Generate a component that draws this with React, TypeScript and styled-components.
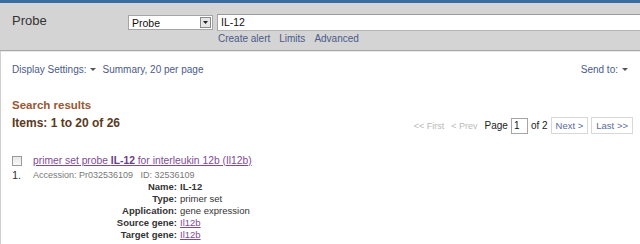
import React from "react";
import styled, { createGlobalStyle } from "styled-components";

const fields: { label: string; value: string; bold?: boolean; link?: boolean }[] = [
  { label: "Name:", value: "IL-12", bold: true },
  { label: "Type:", value: "primer set" },
  { label: "Application:", value: "gene expression" },
  { label: "Source gene:", value: "Il12b", link: true },
  { label: "Target gene:", value: "Il12b", link: true },
];

const App: React.FC = () => {
  return (
    <Page>
      <GlobalStyle />
      <TopBar />
      <Header>
        <Title>Probe</Title>
        <SearchArea>
          <SearchRow>
            <DbSelect>
              <span>Probe</span>
              <DropButton>
                <svg width="5" height="3" viewBox="0 0 5 3">
                  <path d="M0 0h5L2.5 3z" fill="#222" />
                </svg>
              </DropButton>
            </DbSelect>
            <Term>IL-12</Term>
          </SearchRow>
          <SearchLinks>
            <NavLink>Create alert</NavLink>
            <NavLink>Limits</NavLink>
            <NavLink>Advanced</NavLink>
          </SearchLinks>
        </SearchArea>
      </Header>
      <Main>
        <SettingsRow>
          <SettingsGroup>
            <NavLink>
              Display Settings: <Caret />
            </NavLink>
            <NavLink>Summary, 20 per page</NavLink>
          </SettingsGroup>
          <NavLink>
            Send to: <Caret />
          </NavLink>
        </SettingsRow>
        <Heading>Search results</Heading>
        <CountRow>
          <Count>Items: 1 to 20 of 26</Count>
          <Pager>
            <PagerDisabled>&lt;&lt; First</PagerDisabled>
            <PagerDisabled>&lt; Prev</PagerDisabled>
            <PageLabel>Page</PageLabel>
            <PageBox>1</PageBox>
            <PageLabel>of 2</PageLabel>
            <PagerButton>Next &gt;</PagerButton>
            <PagerButton>Last &gt;&gt;</PagerButton>
          </Pager>
        </CountRow>
        <Result>
          <CheckCol>
            <CheckBox />
            <Num>1.</Num>
          </CheckCol>
          <ResultBody>
            <ResultTitle>
              primer set probe <b>IL-12</b> for interleukin 12b (Il12b)
            </ResultTitle>
            <Meta>Accession: Pr032536109&nbsp;&nbsp;&nbsp;ID: 32536109</Meta>
            <FieldTable>
              {fields.map((f) => (
                <React.Fragment key={f.label}>
                  <FieldLabel>{f.label}</FieldLabel>
                  <FieldValue $bold={f.bold} $link={f.link}>
                    {f.value}
                  </FieldValue>
                </React.Fragment>
              ))}
            </FieldTable>
          </ResultBody>
        </Result>
      </Main>
    </Page>
  );
};

const GlobalStyle = createGlobalStyle`
  body {
    margin: 0;
    background: #fff;
    font-family: "Liberation Sans", Arial, sans-serif;
    overflow: hidden;
  }
`;

const Page = styled.div`
  width: 640px;
  height: 244px;
  overflow: hidden;
`;

const TopBar = styled.div`
  height: 3px;
  background: #386ca3;
`;

const Header = styled.div`
  display: flex;
  height: 47px;
  background: #d4d4d4;
  border-bottom: 1px solid #a9a9a9;
  box-shadow: 0 1px 0 #e8e8e8;
  overflow: hidden;
`;

const Title = styled.div`
  flex: 0 0 116px;
  padding: 10px 0 0 12px;
  font-size: 13px;
  color: #333;
`;

const SearchArea = styled.div`
  display: flex;
  flex-direction: column;
  flex-shrink: 0;
  padding-top: 11px;
`;

const SearchRow = styled.div`
  display: flex;
  align-items: center;
  gap: 4px;
`;

const DbSelect = styled.div`
  display: flex;
  align-items: center;
  justify-content: space-between;
  box-sizing: border-box;
  width: 85px;
  height: 15px;
  padding: 0 1px 0 3px;
  background: #fff;
  border: 1px solid #a5a5a5;
  font-size: 10.5px;
  color: #111;
`;

const DropButton = styled.div`
  display: flex;
  align-items: center;
  justify-content: center;
  box-sizing: border-box;
  width: 11px;
  height: 11px;
  background: #e6e6e6;
  border: 1px solid #8a8a8a;
`;

const Term = styled.div`
  box-sizing: border-box;
  width: 440px;
  height: 17px;
  padding: 0 3px;
  line-height: 15px;
  background: #fff;
  border-top: 1px solid #9a9a9a;
  border-bottom: 1px solid #b5b5b5;
  border-left: 1px solid #a5a5a5;
  font-size: 10.5px;
  color: #111;
`;

const SearchLinks = styled.div`
  display: flex;
  gap: 9px;
  padding: 2px 0 0 90px;
`;

const NavLink = styled.span`
  display: inline-flex;
  align-items: center;
  gap: 3px;
  font-size: 10px;
  color: #4b5a8a;
  white-space: nowrap;
`;

const Caret = styled.span`
  display: inline-block;
  width: 0;
  height: 0;
  margin-left: 1px;
  border-left: 3px solid transparent;
  border-right: 3px solid transparent;
  border-top: 3px solid #555;
`;

const Main = styled.div`
  height: 200px;
  border-left: 1px solid #cfcfcf;
  padding: 0 7px 0 11px;
`;

const SettingsRow = styled.div`
  display: flex;
  justify-content: space-between;
  padding: 13px 5px 0 0;
`;

const SettingsGroup = styled.div`
  display: flex;
  gap: 6px;
`;

const Heading = styled.div`
  margin-top: 24px;
  font-size: 11.5px;
  font-weight: bold;
  color: #985735;
`;

const CountRow = styled.div`
  display: flex;
  justify-content: space-between;
  align-items: flex-start;
  margin-top: 5px;
`;

const Count = styled.div`
  font-size: 12px;
  font-weight: bold;
  color: #5b3a22;
`;

const Pager = styled.div`
  display: flex;
  align-items: center;
  gap: 3px;
  margin-top: 1px;
  font-size: 9.5px;
`;

const PagerDisabled = styled.span`
  color: #b9b9b9;
  font-size: 9px;
  margin-right: 4px;
`;

const PageLabel = styled.span`
  color: #222;
  font-size: 10px;
`;

const PageBox = styled.span`
  box-sizing: border-box;
  width: 17px;
  height: 16px;
  padding-left: 2px;
  line-height: 14px;
  border: 1px solid #a5a5a5;
  font-size: 10px;
  color: #111;
`;

const PagerButton = styled.span`
  box-sizing: border-box;
  height: 17px;
  padding: 0 4px;
  line-height: 15px;
  border: 1px solid #d8d8d8;
  color: #5a6a9a;
`;

const Result = styled.div`
  display: flex;
  gap: 11px;
  margin-top: 20px;
`;

const CheckCol = styled.div`
  display: flex;
  flex-direction: column;
  align-items: flex-start;
`;

const CheckBox = styled.span`
  box-sizing: border-box;
  width: 10px;
  height: 10px;
  margin-top: 2px;
  border: 1px solid #9a9a9a;
  background: linear-gradient(#e8e8e8, #f8f8f8);
`;

const Num = styled.span`
  margin-top: 3px;
  font-size: 11px;
  color: #333;
`;

const ResultBody = styled.div`
  display: flex;
  flex-direction: column;
`;

const ResultTitle = styled.span`
  font-size: 10.3px;
  line-height: 14px;
  color: #7f4b99;
  text-decoration: underline;
  b {
    color: #6a3d80;
  }
`;

const Meta = styled.div`
  margin-top: 1px;
  font-size: 9px;
  line-height: 12px;
  color: #777;
`;

const FieldTable = styled.div`
  display: grid;
  grid-template-columns: 144px auto;
  column-gap: 3px;
  font-size: 9.5px;
  line-height: 12px;
`;

const FieldLabel = styled.span`
  text-align: right;
  font-weight: bold;
  color: #333;
`;

const FieldValue = styled.span<{ $bold?: boolean; $link?: boolean }>`
  color: ${(p) => (p.$link ? "#7f4b99" : "#333")};
  font-weight: ${(p) => (p.$bold ? "bold" : "normal")};
  text-decoration: ${(p) => (p.$link ? "underline" : "none")};
`;

export default App;
